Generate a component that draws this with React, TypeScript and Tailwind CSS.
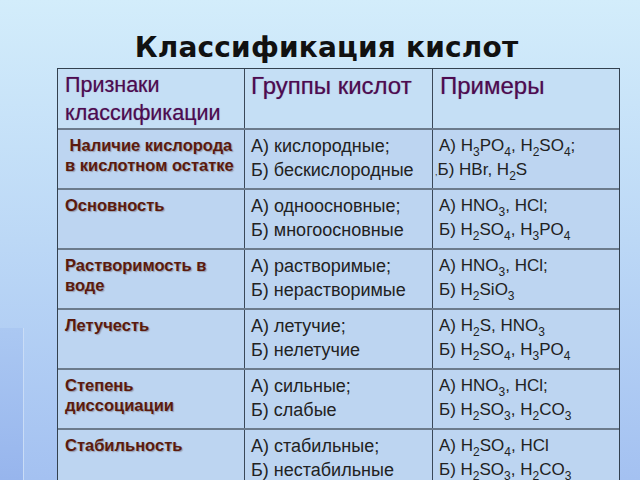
import React from "react";

type Row = {
  sign: string[];
  groups: string[];
  examples: string[];
};

const rows: Row[] = [
  {
    sign: ["\u00a0Наличие кислорода", "в кислотном остатке"],
    groups: ["А) кислородные;", "Б) бескислородные"],
    examples: ["А) H3PO4, H2SO4;", "Б) HBr, H2S"],
  },
  {
    sign: ["Основность"],
    groups: ["А) одноосновные;", "Б) многоосновные"],
    examples: ["А) HNO3, HCl;", "Б) H2SO4, H3PO4"],
  },
  {
    sign: ["Растворимость в", "воде"],
    groups: ["А) растворимые;", "Б) нерастворимые"],
    examples: ["А) HNO3, HCl;", "Б) H2SiO3"],
  },
  {
    sign: ["Летучесть"],
    groups: ["А) летучие;", "Б) нелетучие"],
    examples: ["А) H2S, HNO3", "Б) H2SO4, H3PO4"],
  },
  {
    sign: ["Степень", "диссоциации"],
    groups: ["А) сильные;", "Б) слабые"],
    examples: ["А) HNO3, HCl;", "Б) H2SO3, H2CO3"],
  },
  {
    sign: ["Стабильность"],
    groups: ["А) стабильные;", "Б) нестабильные"],
    examples: ["А) H2SO4, HCl", "Б) H2SO3, H2CO3"],
  },
];

// digits in a formula become subscripts
const Chem = ({ text }: { text: string }) => (
  <>
    {text.split(/(\d)/).map((part, i) =>
      /^\d$/.test(part) ? (
        <sub key={i} className="text-[12px] bottom-[-5px]">
          {part}
        </sub>
      ) : (
        <span key={i}>{part}</span>
      )
    )}
  </>
);

export default function App() {
  return (
    <div className="relative h-[480px] w-[640px] overflow-hidden bg-gradient-to-b from-[#d3edfb] via-[#bcd8f6] to-[#a4c1f1] font-['Liberation_Sans',Arial,sans-serif]">
      {/* decorative strip on the left edge of the slide */}
      <div className="absolute left-0 top-[328px] h-[152px] w-[24px] bg-gradient-to-b from-[#abc8f2] to-[#97b5ed] border-r border-[#c9dcf6]" />

      <div className="relative pt-[32px] pl-[13px] flex justify-center">
        <h1 className="font-['DejaVu_Sans',sans-serif] font-bold text-[28px] leading-[32px] tracking-[0.2px] text-[#111]">
          Классификация кислот
        </h1>
      </div>

      <div className="relative mt-[4px] ml-[57px] w-[563px] border border-[#33414f]">
        {/* header */}
        <div className="grid grid-cols-[187px_188px_186px] h-[61px] bg-[#c5dff5] border-b-2 border-[#6c7b8c]">
          <div className="border-r border-[#3a4858] pl-[7px] pt-[2px] text-[21.5px] leading-[28px] text-[#4d0b50] [text-shadow:0_0_1px_rgba(77,11,80,0.5)]">
            <div>Признаки</div>
            <div>классификации</div>
          </div>
          <div className="border-r border-[#3a4858] pl-[6px] pt-[3px] text-[24px] leading-[28px] text-[#4d0b50] [text-shadow:0_0_1px_rgba(77,11,80,0.5)]">
            Группы кислот
          </div>
          <div className="pl-[7px] pt-[3px] text-[24px] leading-[28px] text-[#4d0b50] [text-shadow:0_0_1px_rgba(77,11,80,0.5)]">
            Примеры
          </div>
        </div>

        {rows.map((row, i) => (
          <div
            key={i}
            className="grid grid-cols-[187px_188px_186px] h-[60px] bg-[#bdd5f1] border-b-2 border-[#6c7b8c]"
          >
            <div className="border-r border-[#3a4858] pl-[7px] pt-[5px] text-[16.5px] leading-[20px] font-bold text-[#5b1a0d] [text-shadow:1px_1px_1px_rgba(60,20,10,0.3)]">
              {row.sign.map((line, j) => (
                <div key={j}>{line}</div>
              ))}
            </div>
            <div className="border-r border-[#3a4858] pl-[6px] pt-[4px] text-[18px] leading-[24px] text-[#222]">
              {row.groups.map((line, j) => (
                <div key={j}>{line}</div>
              ))}
            </div>
            <div className="pl-[6px] pt-[4px] text-[17px] leading-[24px] text-[#222]">
              {row.examples.map((line, j) => (
                <div key={j} className={i === 0 && j === 1 ? "-ml-[4px]" : ""}>
                  {i === 0 && j === 1 && <span className="text-[9px]">,</span>}
                  <Chem text={line} />
                </div>
              ))}
            </div>
          </div>
        ))}
      </div>
    </div>
  );
}
